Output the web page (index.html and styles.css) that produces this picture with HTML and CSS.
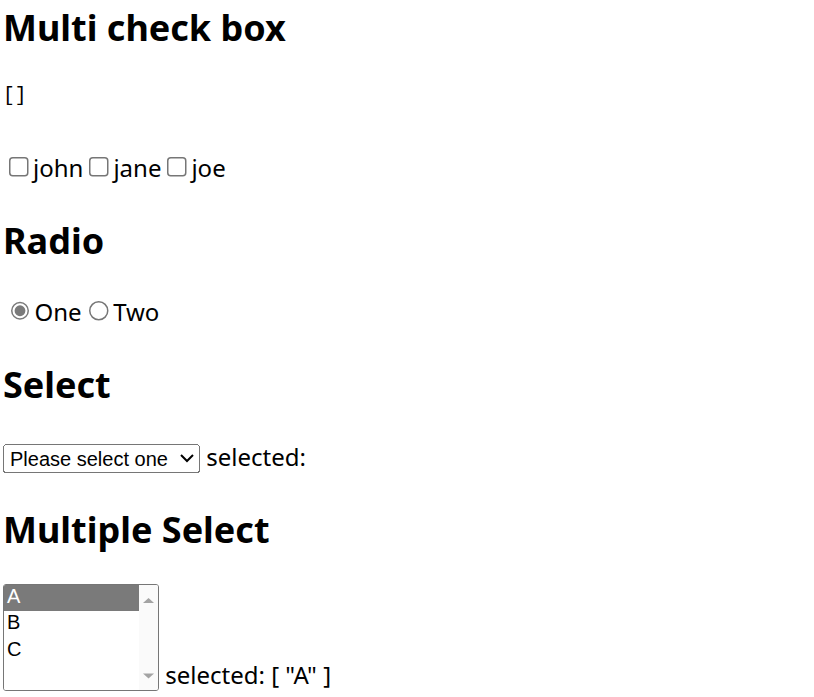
FILE: index.html
```html
<!DOCTYPE html>
<html>
<head>
<meta charset="utf-8">
<title>Form inputs</title>
<link rel="stylesheet" href="styles.css">
</head>
<body>
<div class="app">
  <h2 class="title first">Multi check box</h2>
  <pre class="dump">[]</pre>
  <div class="row checks"><input type="checkbox" id="john" value="john"><label for="john">john</label><input type="checkbox" id="jane" value="jane"><label for="jane">jane</label><input type="checkbox" id="joe" value="joe"><label for="joe">joe</label></div>
  <h2 class="title">Radio</h2>
  <div class="row radios"><input type="radio" id="one" name="r" value="One" checked><label for="one">One</label><input type="radio" id="two" name="r" value="Two"><label for="two">Two</label></div>
  <h2 class="title select-title">Select</h2>
  <div class="row">
    <select class="single">
      <option disabled selected value="">Please select one</option>
      <option>A</option>
      <option>B</option>
      <option>C</option>
    </select>
    <span>selected:</span>
  </div>
  <h2 class="title">Multiple Select</h2>
  <div class="row">
    <span class="listbox">
      <select class="multi" multiple>
        <option selected>A</option>
        <option>B</option>
        <option>C</option>
      </select>
      <span class="scrollbar">
        <svg class="arrow" viewBox="0 0 19 25.5" aria-hidden="true"><polygon points="4,18 15,18 9.5,13" fill="#a3a3a3"/></svg>
        <svg class="arrow" viewBox="0 0 19 25.5" aria-hidden="true"><polygon points="4,9.5 15,9.5 9.5,14.5" fill="#a3a3a3"/></svg>
      </span>
    </span>
    <span>selected: [ "A" ]</span>
  </div>
</div>
</body>
</html>
```
FILE: styles.css
```css
html {
  zoom: 1.5;
}
body {
  margin: 2px;
  font-family: "Noto Sans", "Open Sans", sans-serif;
  font-size: 16px;
  color: #000;
  background: #fff;
}
.title {
  font-size: 24px;
  font-weight: 700;
  margin: 21.3px 0 19.9px;
}
.title.first {
  margin-top: 0;
}
.title.select-title {
  margin-bottom: 20.6px;
}
.dump {
  font-family: "Liberation Mono", monospace;
  font-size: 13px;
  margin: 21.9px 0 29.4px;
}
.row {
  margin: 0;
}
input[type="radio"] {
  accent-color: #7a7a7a;
}
.single {
  width: 131.3px;
  height: 19.3px;
  box-sizing: border-box;
}
.listbox {
  display: inline-flex;
  vertical-align: bottom;
  height: 71.3px;
  box-sizing: border-box;
  border: 1px solid #767676;
  border-radius: 2px;
  background: #fff;
  overflow: hidden;
}
.multi {
  width: 90px;
  height: 100%;
  border: none;
  border-radius: 0;
  padding: 0;
  outline: none;
  background: #fff;
}
.multi option {
  padding: 0 2px 1.6px;
}
.multi option:checked {
  background: #7a7a7a linear-gradient(#7a7a7a, #7a7a7a);
  color: #fff;
}
.scrollbar {
  width: 12.7px;
  display: flex;
  flex-direction: column;
  justify-content: space-between;
  background: #fafafa;
}
.arrow {
  display: block;
  width: 12.7px;
  height: 17px;
}
```
